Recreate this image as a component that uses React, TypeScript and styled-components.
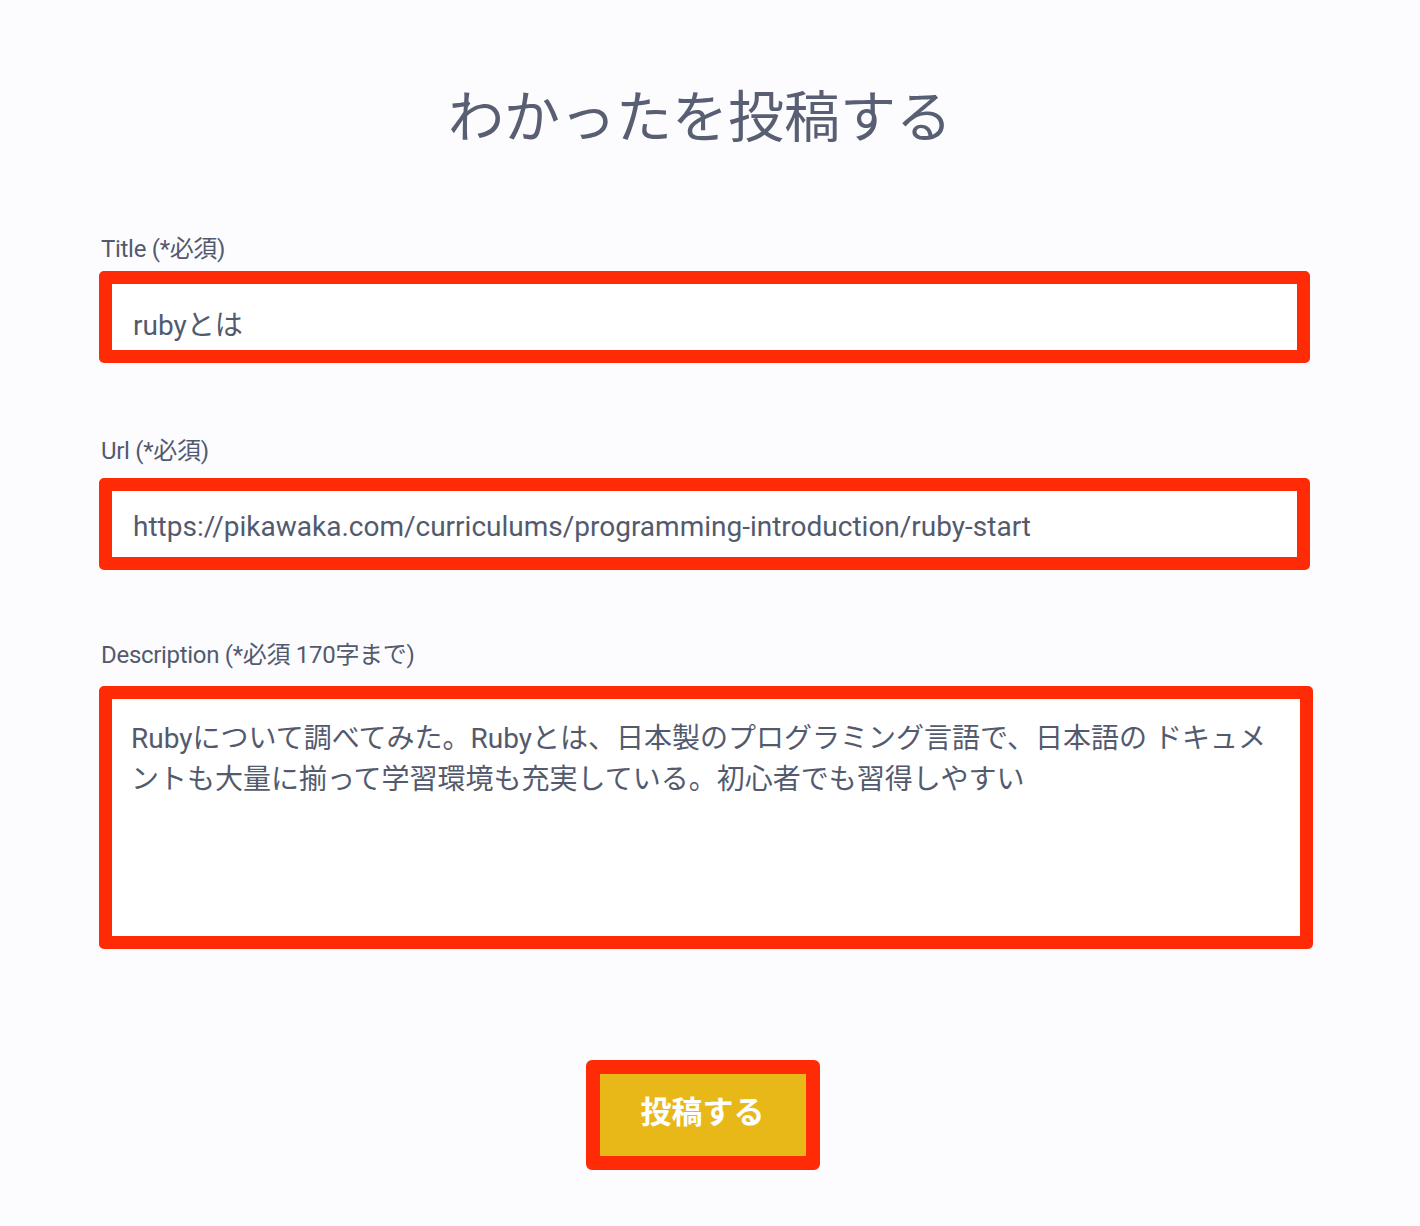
import * as React from 'react';
import styled, { createGlobalStyle } from 'styled-components';

const Global = createGlobalStyle`
	html, body {
		margin: 0;
		padding: 0;
		background: #fcfcfe;
	}
	body {
		font-family: Roboto, "Noto Sans CJK JP", sans-serif;
		color: #535a6e;
	}
`;

const Page = styled.div`
	box-sizing: border-box;
	width: 1420px;
	min-height: 1226px;
	padding: 82px 0 0 99px;
`;

const Heading = styled.h1`
	margin: 0 0 81px;
	width: 1202px;
	text-align: center;
	font-size: 56px;
	font-weight: 400;
	line-height: 72px;
	color: #585f72;
`;

const Form = styled.form`
	display: flex;
	flex-direction: column;
	width: 1214px;
`;

const Field = styled.div<{ gap: number }>`
	display: flex;
	flex-direction: column;
	margin-bottom: ${(p) => p.gap}px;
`;

const Label = styled.label<{ space: number }>`
	font-size: 24px;
	line-height: 28px;
	letter-spacing: -0.3px;
	margin: 0 0 ${(p) => p.space}px 2px;
	color: #535a6e;
`;

const Input = styled.input<{ top: number }>`
	box-sizing: border-box;
	width: 1211px;
	height: 92px;
	border: 13px solid #ff2a06;
	border-radius: 5px;
	background: #ffffff;
	padding: ${(p) => p.top}px 0 0 21px;
	font-family: Roboto, "Noto Sans CJK JP", sans-serif;
	font-size: 28px;
	color: #535a6e;
	outline: none;
`;

const TextArea = styled.textarea`
	box-sizing: border-box;
	width: 1214px;
	height: 263px;
	border: 13px solid #ff2a06;
	border-radius: 5px;
	background: #ffffff;
	padding: 19px 20px 0 19px;
	font-family: Roboto, "Noto Sans CJK JP", sans-serif;
	font-size: 28px;
	line-height: 41px;
	color: #535a6e;
	resize: none;
	outline: none;
`;

const Actions = styled.div`
	display: flex;
	justify-content: center;
	padding-top: 111px;
	width: 1207px;
`;

const Submit = styled.button`
	box-sizing: border-box;
	width: 234px;
	height: 110px;
	border: 14px solid #ff2a06;
	border-radius: 6px;
	background: #e8b718;
	color: #ffffff;
	font-family: Roboto, "Noto Sans CJK JP", sans-serif;
	font-size: 31px;
	font-weight: 700;
	padding: 0 0 12px;
	cursor: pointer;
`;

export default function App() {
	return (
		<Page>
			<Global />
			<Heading>わかったを投稿する</Heading>
			<Form onSubmit={(e) => e.preventDefault()}>
				<Field gap={74}>
					<Label space={8}>Title (*必須)</Label>
					<Input top={12} defaultValue="rubyとは" />
				</Field>
				<Field gap={71}>
					<Label space={13}>Url (*必須)</Label>
					<Input top={4} defaultValue="https://pikawaka.com/curriculums/programming-introduction/ruby-start" />
				</Field>
				<Field gap={0}>
					<Label space={17}>Description (*必須 170字まで)</Label>
					<TextArea defaultValue="Rubyについて調べてみた。Rubyとは、日本製のプログラミング言語で、日本語の ドキュメントも大量に揃って学習環境も充実している。初心者でも習得しやすい" />
				</Field>
				<Actions>
					<Submit type="submit">投稿する</Submit>
				</Actions>
			</Form>
		</Page>
	);
}
